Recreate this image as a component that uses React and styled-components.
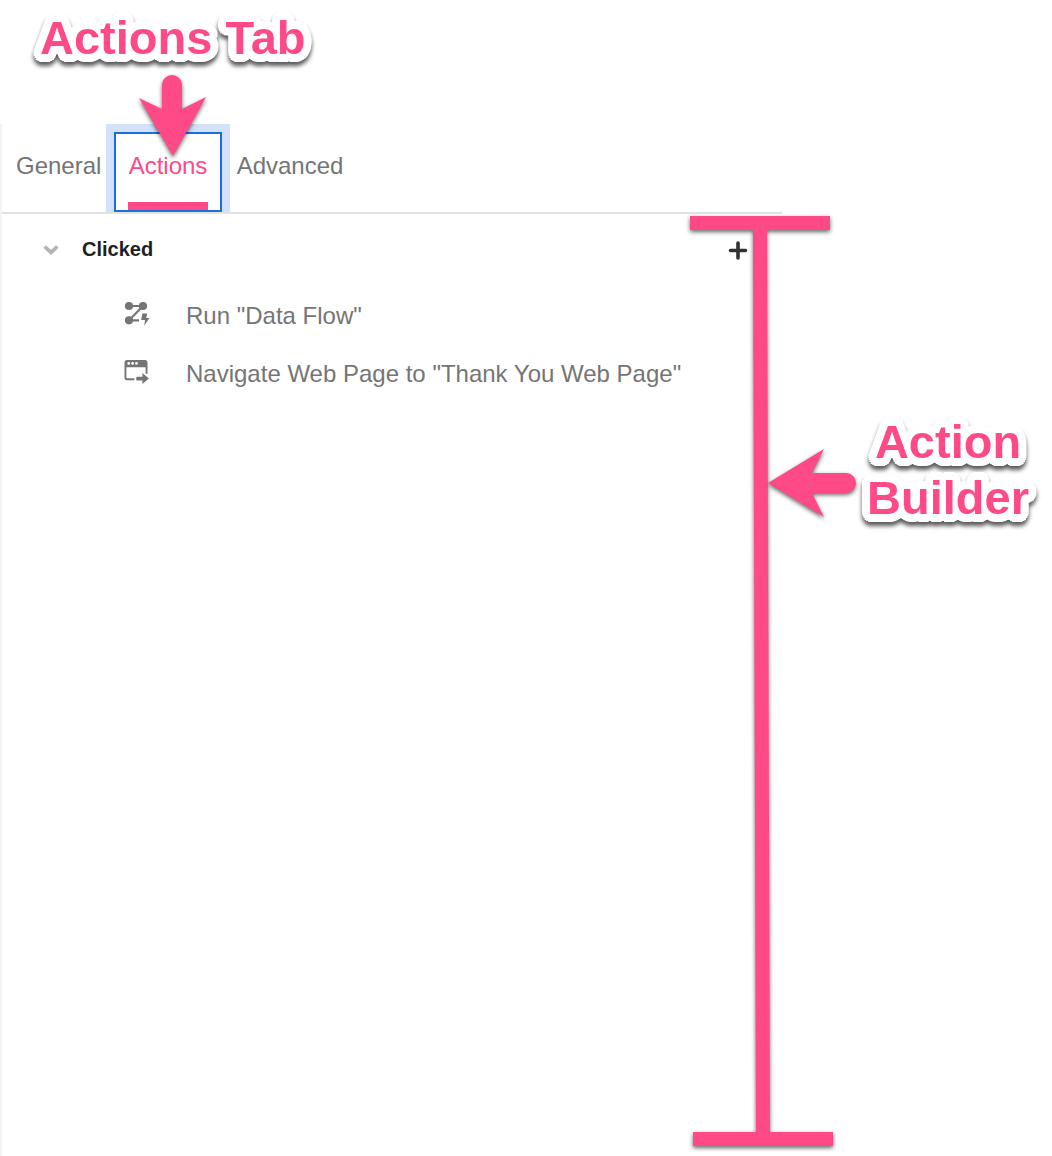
import React, { useState } from "react";
import styled, { createGlobalStyle, css } from "styled-components";

const PINK = "#ff4a87";
const GRAY = "#757575";

/* A round white outline: rings of hard shadows around the glyphs. */
const OUTLINE = [4, 8]
  .flatMap((radius) =>
    Array.from({ length: 24 }, (_, i) => {
      const angle = (i * Math.PI) / 12;
      const x = (Math.cos(angle) * radius).toFixed(2);
      const y = (Math.sin(angle) * radius).toFixed(2);
      return `${x}px ${y}px 0 #fff`;
    })
  )
  .join(", ");

const GlobalStyle = createGlobalStyle`
  *, *::before, *::after { box-sizing: border-box; }
  body {
    margin: 0;
    background: #fff;
    font-family: "Liberation Sans", Arial, sans-serif;
  }
  button { font: inherit; background: none; border: 0; padding: 0; cursor: pointer; }
`;

const Page = styled.main`
  position: relative;
  display: grid;
  grid-template-columns: minmax(0, 1fr) 270px;
  min-height: 100vh;
  padding-top: 124px;
`;

const Panel = styled.section`
  border-left: 2px solid #f3f3f3;
`;

const TabList = styled.div`
  display: grid;
  grid-template-columns: 112px 108px 136px;
  padding-top: 8px;
  border-bottom: 2px solid #e2e2e2;
`;

const Tab = styled.button`
  && {
    display: grid;
    grid-template-rows: 1fr 8px;
    height: 80px;
    padding: 0 12px;
    border: 2px solid transparent;
    border-bottom-width: 2px;
    color: ${GRAY};
    font-size: 24px;
    line-height: 28px;
    text-align: center;
    outline: none;
    ${({ $active }) =>
      $active &&
      css`
        position: relative;
        color: ${PINK};
        border-color: #1a6fe0;
        background: #fff;
        box-shadow: 0 0 0 8px #d3e1fb;
        clip-path: inset(-8px -8px 0 -8px);
      `}
  }
`;

const TabText = styled.span`
  align-self: center;
  padding-bottom: 4px;
`;

const Underline = styled.span`
  background: ${({ $active }) => ($active ? PINK : "transparent")};
`;

const EventHeader = styled.header`
  display: flex;
  align-items: center;
  height: 72px;
  padding: 0 34px 0 38px;
`;

const IconButton = styled.button`
  display: flex;
  color: ${({ $tone }) => $tone};
`;

const EventName = styled.h2`
  flex: 1;
  margin: 0 18px;
  padding-bottom: 2px;
  font-size: 20px;
  line-height: 24px;
  font-weight: 700;
  color: #1f1f1f;
`;

const ActionList = styled.ul`
  list-style: none;
  margin: 0;
  padding: 0 24px 0 120px;
`;

const ActionItem = styled.li`
  display: flex;
  align-items: center;
  gap: 36px;
  min-height: 58px;
  color: ${GRAY};
  font-size: 24px;
  line-height: 28px;

  svg { flex: none; }
`;

const ActionText = styled.span`
  padding-top: 2px;
`;

/* Annotations float above the panel. */
const Callout = styled.p`
  position: absolute;
  top: ${({ $top }) => $top}px;
  ${({ $left }) => $left !== undefined && `left: ${$left}px;`}
  ${({ $right }) => $right !== undefined && `right: ${$right}px;`}
  margin: 0;
  color: ${PINK};
  font-size: 47px;
  line-height: 56px;
  font-weight: 700;
  text-align: center;
`;

const CalloutLine = styled.span`
  display: block;
  text-shadow: ${OUTLINE};
  filter: drop-shadow(0 4px 2px rgba(0, 0, 0, 0.65));
`;

const Drawing = styled.svg`
  position: absolute;
  overflow: visible;
  fill: ${PINK};
  pointer-events: none;
  filter: drop-shadow(0 2px 2px rgba(0, 0, 0, 0.6));
`;

const DownArrow = styled(Drawing)`
  top: 75px;
  left: 138px;
`;

const LeftArrow = styled(Drawing)`
  top: 449px;
  right: 195px;
`;

const Bracket = styled(Drawing)`
  top: 215px;
  right: 218px;
  height: calc(100% - 224px);
`;

const ChevronIcon = () => (
  <svg width="24" height="24" viewBox="0 0 24 24" aria-hidden="true">
    <path d="M4.600 8.500 11 14.400l6.400-5.900" fill="none" stroke="#b3b3b3" strokeWidth="3.700" />
  </svg>
);

const PlusIcon = () => (
  <svg width="20" height="20" viewBox="0 0 20 20" aria-hidden="true">
    <path d="M10 3v15M2.500 10.500H17.500" fill="none" stroke="currentColor" strokeWidth="3.600" strokeLinecap="round" />
  </svg>
);

const FlowIcon = () => (
  <svg width="28" height="28" viewBox="0 0 28 28" fill="currentColor" aria-hidden="true">
    <path d="M7 5h14L7 19.300h10" fill="none" stroke="currentColor" strokeWidth="2.200" />
    <circle cx="7" cy="5" r="4.100" />
    <circle cx="21" cy="5" r="4.100" />
    <circle cx="7" cy="19.300" r="4.100" />
    <path d="M20.400 12.600h4.800l-1 4.300h3.200L22.200 24.800l.8-5.800h-3.900z" />
  </svg>
);

const NavigateIcon = () => (
  <svg width="28" height="28" viewBox="0 0 28 28" fill="currentColor" aria-hidden="true">
    <path
      fillRule="evenodd"
      d="M5 1h18a2.500 2.500 0 0 1 2.500 2.500v11.200h-1.900V8.300H4.400v10.200a.8.800 0 0 0 .8.800h7.100v2H5a2.500 2.500 0 0 1-2.500-2.500V3.500A2.500 2.500 0 0 1 5 1zM6.700 3a1.400 1.400 0 1 0 0 2.800 1.400 1.400 0 0 0 0-2.800zm3.900 0a1.400 1.400 0 1 0 0 2.800 1.400 1.400 0 0 0 0-2.800zm3.900 0a1.400 1.400 0 1 0 0 2.800 1.400 1.400 0 0 0 0-2.800z"
    />
    <path d="M15.200 17.800h5.200v-3.700l6.500 5.500-6.500 5.500v-3.700h-5.200a1 1 0 0 1-1-1v-1.600a1 1 0 0 1 1-1z" />
  </svg>
);

const TABS = ["General", "Actions", "Advanced"];
const ACTIONS = [
  { icon: FlowIcon, text: 'Run "Data Flow"' },
  { icon: NavigateIcon, text: 'Navigate Web Page to "Thank You Web Page"' },
];

export default function App() {
  const [active, setActive] = useState("Actions");
  const [open, setOpen] = useState(true);

  return (
    <Page>
      <GlobalStyle />
      <Panel>
        <TabList role="tablist">
          {TABS.map((name) => (
            <Tab
              key={name}
              type="button"
              role="tab"
              aria-selected={name === active}
              $active={name === active}
              onClick={() => setActive(name)}
            >
              <TabText>{name}</TabText>
              <Underline $active={name === active} />
            </Tab>
          ))}
        </TabList>
        <EventHeader>
          <IconButton
            type="button"
            $tone="#b3b3b3"
            aria-label="Toggle Clicked"
            aria-expanded={open}
            onClick={() => setOpen(!open)}
          >
            <ChevronIcon />
          </IconButton>
          <EventName>Clicked</EventName>
          <IconButton type="button" $tone="#303234" aria-label="Add action">
            <PlusIcon />
          </IconButton>
        </EventHeader>
        {open && (
          <ActionList>
            {ACTIONS.map(({ icon: Icon, text }) => (
              <ActionItem key={text}>
                <Icon />
                <ActionText>{text}</ActionText>
              </ActionItem>
            ))}
          </ActionList>
        )}
      </Panel>

      <Callout $top={10} $left={40}>
        <CalloutLine>Actions Tab</CalloutLine>
      </Callout>
      <DownArrow width="68" height="82" viewBox="0 0 68 82" aria-hidden="true">
        <path d="M24 10a10 10 0 0 1 20 0v24l24-12L35 81 1 23l23 11z" />
      </DownArrow>
      <Bracket width="144" viewBox="0 0 144 932" preserveAspectRatio="none" aria-hidden="true">
        <path d="M0 1h140v14H77l3 902h63v14H3v-14h63L63 15H0z" />
      </Bracket>
      <LeftArrow width="90" height="68" viewBox="0 0 90 68" aria-hidden="true">
        <path d="M79 24a10 10 0 0 1 0 20H45l12 24L1 34 57 0 45 24z" />
      </LeftArrow>
      <Callout $top={414} $right={23}>
        <CalloutLine>Action</CalloutLine>
        <CalloutLine>Builder</CalloutLine>
      </Callout>
    </Page>
  );
}
